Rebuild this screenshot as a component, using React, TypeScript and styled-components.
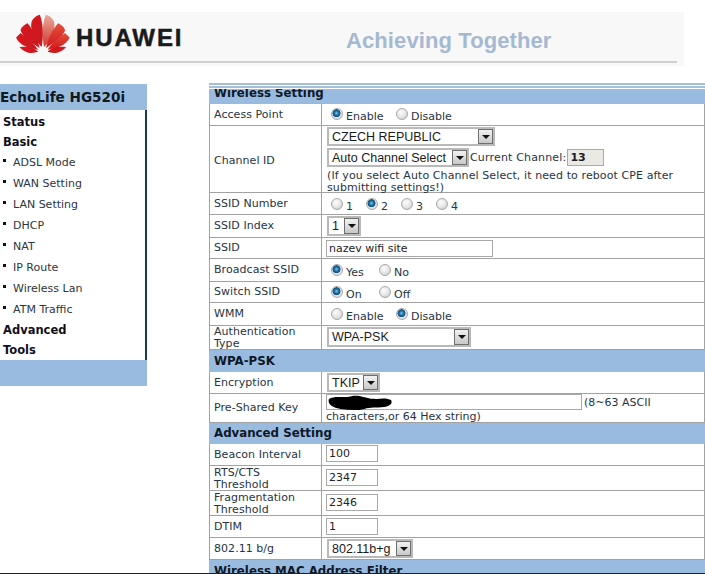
import React from "react";
import styled, { createGlobalStyle } from "styled-components";

const Global = createGlobalStyle`
  html, body { margin: 0; padding: 0; background: #fff; }
  body { font-family: "DejaVu Sans", Verdana, sans-serif; font-size: 11px; color: #27343f; }
`;

const Page = styled.div`
  width: 705px;
  height: 574px;
  padding-top: 12px;
  box-sizing: border-box;
  overflow: hidden;
  border-bottom: 1px solid #222;
`;

const Banner = styled.header`
  width: 684px;
  height: 54px;
  background: #f8f8f8;
`;

const BannerRow = styled.div`
  width: 677px;
  height: 51px;
  padding-left: 15px;
  box-sizing: border-box;
  display: flex;
  align-items: center;
  border-bottom: 2px solid #cfcfcf;
`;

const LogoMark = styled.svg`
  width: 56px;
  height: 42px;
  margin-top: -6px;
  flex: none;
`;

const Brand = styled.div`
  width: 105px;
  margin: 2px 0 0 5px;
  flex: none;
  font-family: "Liberation Sans", Arial, sans-serif;
  font-weight: 700;
  font-size: 24px;
  letter-spacing: 1.9px;
  -webkit-text-stroke: 0.5px #1b1b1b;
  color: #1b1b1b;
  white-space: nowrap;
`;

const Slogan = styled.div`
  margin: 8px 0 0 165px;
  font-family: "Liberation Sans", Arial, sans-serif;
  font-weight: 700;
  font-size: 22px;
  letter-spacing: 0.1px;
  color: #a5b9d3;
  white-space: nowrap;
`;

const Main = styled.div`
  display: flex;
  align-items: flex-start;
  margin-top: 17px;
`;

const Sidebar = styled.nav`
  width: 147px;
  margin-top: 1px;
  flex: none;
`;

const SideTitle = styled.div`
  height: 26px;
  line-height: 26px;
  background: #99bbdf;
  font-weight: 700;
  font-size: 13.6px;
  color: #101820;
  white-space: nowrap;
`;

const SideBody = styled.div`
  height: 250px;
  padding: 2px 0 0 3px;
  box-sizing: border-box;
  border-right: 2px solid #1c3a55;
`;

const SideGroup = styled.div`
  height: 20px;
  line-height: 20px;
  font-weight: 700;
  font-size: 11.5px;
  color: #120f1c;
`;

const SideItem = styled.div`
  height: 21px;
  line-height: 21px;
  padding-left: 10px;
  color: #2d3540;
  display: flex;
  align-items: center;
  &::before {
    content: "";
    width: 3px;
    height: 3px;
    background: #111;
    margin: -4px 7px 0 -10px;
    flex: none;
  }
`;

const SideFoot = styled.div`
  height: 26px;
  background: #99bbdf;
`;

const Panel = styled.section`
  width: 496px;
  margin-left: 62px;
  flex: none;
`;

const TopRule = styled.div`
  height: 2px;
  margin-bottom: 1px;
  background: #a3bfda;
`;

const Heading = styled.div<{ $h: number; $shift?: number }>`
  height: ${(p) => p.$h}px;
  overflow: hidden;
  background: #99bbdf;
  padding: ${(p) => p.$shift ?? 0}px 0 0 5px;
  box-sizing: border-box;
  line-height: ${(p) => p.$h}px;
  font-weight: 700;
  font-size: 11.8px;
  color: #101826;
  white-space: nowrap;
`;

const ClippedTitle = styled.div`
  margin-top: -2px;
  height: 16px;
  line-height: 13px;
`;

const Row = styled.div<{ $h: number }>`
  display: flex;
  height: ${(p) => p.$h}px;
  box-sizing: border-box;
  border: solid #a2a2a2;
  border-width: 0 1px 1px 1px;
`;

const Label = styled.div<{ $drop?: number }>`
  width: 112px;
  flex: none;
  padding: ${(p) => p.$drop ?? 0}px 0 0 4px;
  box-sizing: border-box;
  border-right: 1px solid #a2a2a2;
  display: flex;
  align-items: center;
  line-height: 12px;
  letter-spacing: 0.05px;
`;

const Value = styled.div`
  flex: 1;
  min-width: 0;
  padding-left: 5px;
  display: flex;
  align-items: center;
  white-space: nowrap;
`;

const Stack = styled.div`
  flex: 1;
  min-width: 0;
  padding: 1px 0 0 5px;
  display: flex;
  flex-direction: column;
`;

const Line = styled.div<{ $mt?: number }>`
  display: flex;
  align-items: center;
  margin-top: ${(p) => p.$mt ?? 0}px;
  white-space: nowrap;
`;

const Note = styled.div`
  line-height: 12px;
  margin-top: 3px;
  letter-spacing: 0.1px;
  white-space: nowrap;
`;

const CurrentLabel = styled.span`
  margin-left: 1px;
  letter-spacing: 0.17px;
`;

const RadioRow = styled.div<{ $drop?: number }>`
  display: flex;
  padding: ${(p) => p.$drop ?? 2}px 0 0 4px;
`;

const Option = styled.div<{ $w: number }>`
  width: ${(p) => p.$w}px;
  display: flex;
  align-items: flex-start;
`;

const RadioDot = styled.span<{ $on?: boolean }>`
  width: 12px;
  height: 12px;
  flex: none;
  border-radius: 50%;
  box-sizing: border-box;
  border: 1px solid #a9a9a9;
  margin-right: 3px;
  background: ${(p) =>
    p.$on
      ? "radial-gradient(circle at 45% 42%, #7fc0e6 0, #1b6fa3 28%, #0f4f80 46%, #e6e6e6 54%, #cfcfcf 100%)"
      : "radial-gradient(circle at 40% 35%, #fdfdfd 0, #e4e4e4 55%, #bdbdbd 100%)"};
`;

const OptionText = styled.span`
  margin-top: 2px;
  line-height: 13px;
`;

const SelectBox = styled.div<{ $w: number; $h?: number; $mt?: number }>`
  width: ${(p) => p.$w}px;
  height: ${(p) => p.$h ?? 19}px;
  margin-top: ${(p) => p.$mt ?? 0}px;
  flex: none;
  display: flex;
  align-items: center;
  justify-content: space-between;
  box-sizing: border-box;
  border: 2px solid #b9b9b9;
  background: #fff;
  padding-left: 3px;
  font-family: "Liberation Sans", Arial, sans-serif;
  font-size: 12.5px;
  color: #1a1a1a;
  white-space: nowrap;
`;

const SelectButton = styled.span`
  width: 15px;
  align-self: stretch;
  flex: none;
  display: flex;
  align-items: center;
  justify-content: center;
  box-sizing: border-box;
  border: 1px solid #6e6e6e;
  background: linear-gradient(#f2f2f2, #c8c8c8);
  &::after {
    content: "";
    border: solid transparent;
    border-width: 4px 4px 0;
    border-top-color: #111;
  }
`;

const TextBox = styled.div<{ $w: number; $h?: number; $mt?: number }>`
  position: relative;
  width: ${(p) => p.$w}px;
  height: ${(p) => p.$h ?? 17}px;
  margin-top: ${(p) => p.$mt ?? 0}px;
  flex: none;
  box-sizing: border-box;
  border: 1px solid #a9a9a9;
  padding-left: 2px;
  line-height: 15px;
  font-size: 11px;
  color: #222;
`;

const InputCol = styled(Value)`
  padding-left: 4px;
`;

const ReadBox = styled.div`
  width: 37px;
  height: 17px;
  margin-left: 1px;
  box-sizing: border-box;
  border: 1px solid #a9a9a9;
  background: #ebe9e4;
  padding-left: 2px;
  line-height: 15px;
  font-weight: 700;
  color: #17202a;
`;

const KeyStack = styled.div`
  flex: 1;
  min-width: 0;
  padding-left: 4px;
  display: flex;
  flex-direction: column;
`;

const KeyTail = styled.span`
  margin-left: 2px;
`;

const KeySecond = styled.div`
  line-height: 12px;
  margin-top: 1px;
`;

const Scribble = styled.svg`
  position: absolute;
  left: 0;
  top: 0;
  width: 65px;
  height: 16px;
`;

const Logo = () => (
  <LogoMark viewBox="22 15 160 120" aria-hidden="true">
    <defs>
      <linearGradient id="pink" x1="0" y1="0" x2="0" y2="1">
        <stop offset="0" stopColor="#e8aa9c" />
        <stop offset="1" stopColor="#d2352a" />
      </linearGradient>
      <linearGradient id="red" x1="0" y1="0" x2="1" y2="1">
        <stop offset="0" stopColor="#d8161e" />
        <stop offset="1" stopColor="#c81a20" />
      </linearGradient>
      <linearGradient id="redRight" x1="0" y1="0" x2="0" y2="1">
        <stop offset="0" stopColor="#e4503a" />
        <stop offset="1" stopColor="#d0181e" />
      </linearGradient>
    </defs>
    <path fill="url(#red)" d="M98 112C80 95 62 60 70 38 75 28 85 22 93 20 103 45 104 80 98 112Z" />
    <path fill="url(#red)" d="M92 115C70 100 45 85 38 65 38 58 48 48 58 44 75 65 88 90 92 115Z" />
    <path fill="url(#red)" d="M88 120C65 115 35 110 25 85 30 80 35 75 38 72 55 85 75 100 88 120Z" />
    <path fill="url(#red)" d="M88 126C70 132 50 130 35 112L60 111C70 112 80 118 88 126Z" />
    <g transform="matrix(-1 0 0 1 203 0)">
      <path fill="url(#pink)" d="M98 112C80 95 62 60 70 38 75 28 85 22 93 20 103 45 104 80 98 112Z" />
      <path fill="url(#redRight)" d="M92 115C70 100 45 85 38 65 38 58 48 48 58 44 75 65 88 90 92 115Z" />
      <path fill="url(#redRight)" d="M88 120C65 115 35 110 25 85 30 80 35 75 38 72 55 85 75 100 88 120Z" />
      <path fill="url(#red)" d="M88 126C70 132 50 130 35 112L60 111C70 112 80 118 88 126Z" />
    </g>
  </LogoMark>
);

const Radios = ({ items, on, w, drop }: { items: string[]; on: number; w: number; drop?: number }) => (
  <RadioRow $drop={drop}>
    {items.map((t, i) => (
      <Option key={t} $w={w}>
        <RadioDot $on={i === on} />
        <OptionText>{t}</OptionText>
      </Option>
    ))}
  </RadioRow>
);

const Select = ({ text, w, h, mt }: { text: string; w: number; h?: number; mt?: number }) => (
  <SelectBox $w={w} $h={h} $mt={mt}>
    {text}
    <SelectButton />
  </SelectBox>
);

const menu = ["ADSL Mode", "WAN Setting", "LAN Setting", "DHCP", "NAT", "IP Route", "Wireless Lan", "ATM Traffic"];

export default function App() {
  return (
    <Page>
      <Global />
      <Banner>
        <BannerRow>
          <Logo />
          <Brand>HUAWEI</Brand>
          <Slogan>Achieving Together</Slogan>
        </BannerRow>
      </Banner>
      <Main>
        <Sidebar>
          <SideTitle>EchoLife HG520i</SideTitle>
          <SideBody>
            <SideGroup>Status</SideGroup>
            <SideGroup>Basic</SideGroup>
            {menu.map((m) => (
              <SideItem key={m}>{m}</SideItem>
            ))}
            <SideGroup>Advanced</SideGroup>
            <SideGroup>Tools</SideGroup>
          </SideBody>
          <SideFoot />
        </Sidebar>
        <Panel>
          <TopRule />
          <TopRule />
          <Heading $h={15}>
            <ClippedTitle>Wireless Setting</ClippedTitle>
          </Heading>
          <Row $h={22}>
            <Label>Access Point</Label>
            <Value>
              <Radios items={["Enable", "Disable"]} on={0} w={65} />
            </Value>
          </Row>
          <Row $h={67}>
            <Label $drop={4}>Channel ID</Label>
            <Stack>
              <Select text="CZECH REPUBLIC" w={168} />
              <Line $mt={2}>
                <Select text="Auto Channel Select" w={142} />
                <CurrentLabel>Current Channel:</CurrentLabel>
                <ReadBox>13</ReadBox>
              </Line>
              <Note>
                (If you select Auto Channel Select, it need to reboot CPE after
                <br />
                submitting settings!)
              </Note>
            </Stack>
          </Row>
          <Row $h={22}>
            <Label>SSID Number</Label>
            <Value>
              <Radios items={["1", "2", "3", "4"]} on={1} w={35} drop={4} />
            </Value>
          </Row>
          <Row $h={23}>
            <Label>SSID Index</Label>
            <Value>
              <Select text="1" w={34} h={20} />
            </Value>
          </Row>
          <Row $h={21}>
            <Label>SSID</Label>
            <InputCol>
              <TextBox $w={167}>nazev wifi site</TextBox>
            </InputCol>
          </Row>
          <Row $h={23}>
            <Label>Broadcast SSID</Label>
            <Value>
              <Radios items={["Yes", "No"]} on={0} w={48} />
            </Value>
          </Row>
          <Row $h={21}>
            <Label>Switch SSID</Label>
            <Value>
              <Radios items={["On", "Off"]} on={0} w={48} />
            </Value>
          </Row>
          <Row $h={23}>
            <Label>WMM</Label>
            <Value>
              <Radios items={["Enable", "Disable"]} on={1} w={65} />
            </Value>
          </Row>
          <Row $h={24}>
            <Label>
              Authentication
              <br />
              Type
            </Label>
            <Value>
              <Select text="WPA-PSK" w={144} h={20} mt={-2} />
            </Value>
          </Row>
          <Heading $h={22}>WPA-PSK</Heading>
          <Row $h={22}>
            <Label>Encryption</Label>
            <Value>
              <Select text="TKIP" w={53} />
            </Value>
          </Row>
          <Row $h={29}>
            <Label>Pre-Shared Key</Label>
            <KeyStack>
              <Line>
                <TextBox $w={256} $h={16}>
                  <Scribble viewBox="0 0 66 16" aria-hidden="true">
                    <path
                      fill="#000"
                      d="M2 4C6 1 13 2 20 2 25 1 28 0 33 1 38 2 42 4 50 4 56 3 62 3 65 5 67 8 64 11 58 12 50 13 44 12 38 14 30 16 22 15 14 14 7 13 0 10 2 4Z"
                    />
                  </Scribble>
                </TextBox>
                <KeyTail>(8~63 ASCII</KeyTail>
              </Line>
              <KeySecond>characters,or 64 Hex string)</KeySecond>
            </KeyStack>
          </Row>
          <Heading $h={21}>Advanced Setting</Heading>
          <Row $h={22}>
            <Label>Beacon Interval</Label>
            <InputCol>
              <TextBox $w={52} $mt={-2}>100</TextBox>
            </InputCol>
          </Row>
          <Row $h={25}>
            <Label $drop={2}>
              RTS/CTS
              <br />
              Threshold
            </Label>
            <InputCol>
              <TextBox $w={52} $mt={-2}>2347</TextBox>
            </InputCol>
          </Row>
          <Row $h={25}>
            <Label $drop={2}>
              Fragmentation
              <br />
              Threshold
            </Label>
            <InputCol>
              <TextBox $w={52} $mt={-2}>2346</TextBox>
            </InputCol>
          </Row>
          <Row $h={22}>
            <Label>DTIM</Label>
            <InputCol>
              <TextBox $w={52}>1</TextBox>
            </InputCol>
          </Row>
          <Row $h={22}>
            <Label>802.11 b/g</Label>
            <Value>
              <Select text="802.11b+g" w={86} />
            </Value>
          </Row>
          <Heading $h={15} $shift={4}>Wireless MAC Address Filter</Heading>
        </Panel>
      </Main>
    </Page>
  );
}
